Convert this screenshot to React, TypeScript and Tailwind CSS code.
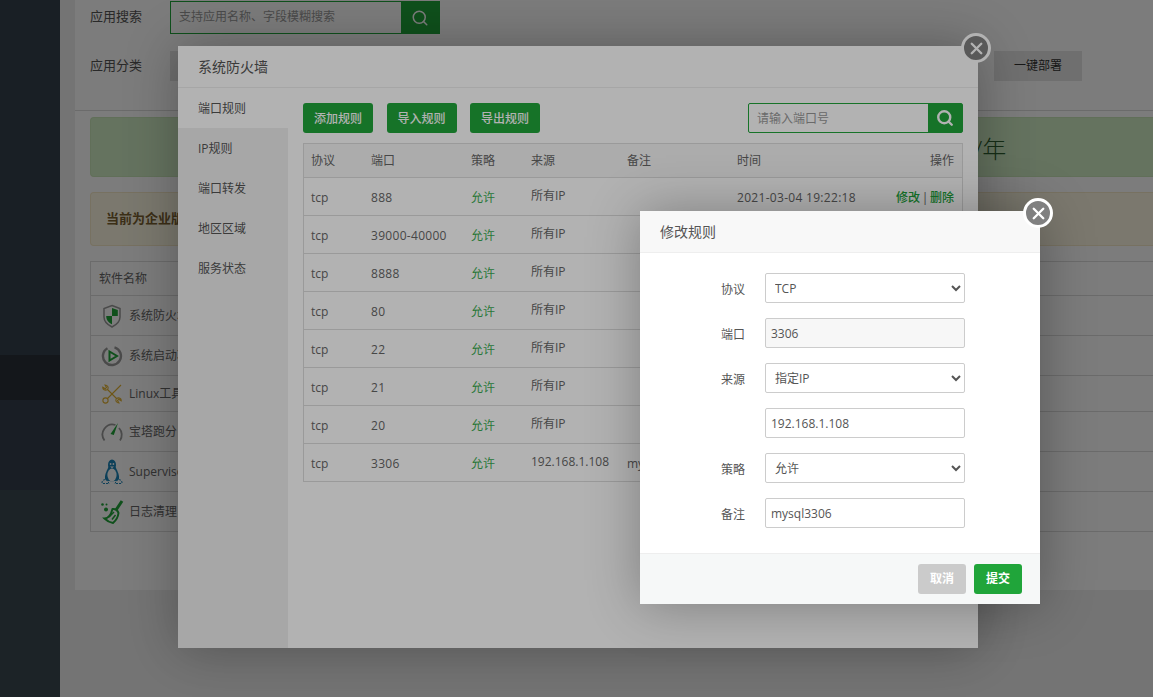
import React from 'react';
import { Search, X } from 'lucide-react';

const FONT = "font-['Open_Sans','Noto_Sans_CJK_SC',sans-serif]";

const ShieldIcon = () => (
  <svg width="20" height="24" viewBox="0 0 20 24">
    <path d="M10 1.5 L18 4.5 V13 C18 18 14 21 10 23 C6 21 2 18 2 13 V4.5 Z" fill="#fff" stroke="#999" strokeWidth="1.5" />
    <path d="M10 4 L15.8 6 V12 H10 Z" fill="#20a53a" />
    <path d="M10 12 V20.3 C7 18.8 4.2 16.4 4.2 12 Z" fill="#20a53a" />
  </svg>
);

const PlayIcon = () => (
  <svg width="22" height="22" viewBox="0 0 22 22">
    <path d="M13.5 2.4 A9 9 0 1 1 6.5 3.2" fill="none" stroke="#999" strokeWidth="2.4" />
    <path d="M8.5 6.5 L16 11 L8.5 15.5 Z" fill="none" stroke="#20a53a" strokeWidth="2" />
  </svg>
);

const ToolsIcon = () => (
  <svg width="20" height="20" viewBox="0 0 20 20" fill="none" stroke="#e2b232" strokeWidth="1.1">
    <path d="M19 1 L5.5 14.5" />
    <circle cx="3.5" cy="16.5" r="2.6" />
    <path d="M5.5 5.5 L14.5 14.5" />
    <path d="M3 1 L4.5 3.5 L3.2 4.8 L0.8 3.2 C0.5 5.5 3 7 5.5 5.5 C7 3.5 5.5 1 3 1 Z" />
    <path d="M17 19 L15.5 16.5 L16.8 15.2 L19.2 16.8 C19.5 14.5 17 13 14.5 14.5 C13 16.5 14.5 19 17 19 Z" />
  </svg>
);

const GaugeIcon = () => (
  <svg width="22" height="20" viewBox="0 0 22 20" fill="none">
    <path d="M3.5 18.5 A10 10 0 0 1 14.5 3" stroke="#999" strokeWidth="1.8" />
    <path d="M18 6 A10 10 0 0 1 19 18.5" stroke="#999" strokeWidth="1.8" />
    <path d="M17 1 L12.8 13 L9.5 12 Z" fill="#20a53a" />
  </svg>
);

const PenguinIcon = () => (
  <svg width="22" height="26" viewBox="0 0 22 26">
    <ellipse cx="11" cy="6" rx="4" ry="5.5" fill="#1c84b8" />
    <path d="M7.5 8 C5 13 3.5 16 4 20 C5 23 17 23 18 20 C18.5 16 17 13 14.5 8 Z" fill="#1c84b8" />
    <ellipse cx="11" cy="16" rx="4.6" ry="6.5" fill="#fff" />
    <circle cx="9.6" cy="5" r="0.9" fill="#fff" />
    <circle cx="12.4" cy="5" r="0.9" fill="#fff" />
    <path d="M9 7.5 H13 L11 9.3 Z" fill="#fff" />
    <path d="M1 24 C1 20.5 4 20 6.5 21.5 L8 24.5 H2 Z M21 24 C21 20.5 18 20 15.5 21.5 L14 24.5 H20 Z" fill="none" stroke="#1c84b8" strokeWidth="1" strokeDasharray="2 1" />
  </svg>
);

const BroomIcon = () => (
  <svg width="24" height="24" viewBox="0 0 24 24" fill="none">
    <path d="M22 1 L16 10" stroke="#20a53a" strokeWidth="3" />
    <path d="M12.5 9 C15 8.5 18 10.5 18.5 13 C18 17 15.5 21 13 23 C10 22.5 7 21 4.5 18.5 C8 18.5 11 15 12.5 9 Z" fill="none" stroke="#20a53a" strokeWidth="2" />
    <path d="M9 17 L14 12 M12 19.5 L15.5 15" stroke="#20a53a" strokeWidth="1.5" />
    <circle cx="2.5" cy="4.5" r="1.3" fill="#20a53a" />
    <circle cx="6.5" cy="4.5" r="1" fill="#20a53a" />
    <circle cx="6" cy="9.5" r="2" fill="#20a53a" />
  </svg>
);

const software = [
  { name: '系统防火墙', icon: <ShieldIcon />, h: 'h-10' },
  { name: '系统启动项', icon: <PlayIcon />, h: 'h-10' },
  { name: 'Linux工具箱', icon: <ToolsIcon />, h: 'h-9' },
  { name: '宝塔跑分', icon: <GaugeIcon />, h: 'h-10' },
  { name: 'Supervisor', icon: <PenguinIcon />, h: 'h-10' },
  { name: '日志清理', icon: <BroomIcon />, h: 'h-10' },
];

const rules = [
  { port: '888', source: '所有IP', note: '' },
  { port: '39000-40000', source: '所有IP', note: '' },
  { port: '8888', source: '所有IP', note: '' },
  { port: '80', source: '所有IP', note: '' },
  { port: '22', source: '所有IP', note: '' },
  { port: '21', source: '所有IP', note: '' },
  { port: '20', source: '所有IP', note: '' },
  { port: '3306', source: '192.168.1.108', note: 'mysql3306' },
];

const tabs = ['端口规则', 'IP规则', '端口转发', '地区区域', '服务状态'];

const ROW = 'grid grid-cols-[60px_100px_60px_96px_110px_1fr] items-center pl-[7px] pr-[8px]';

function CloseBtn({ className }: { className: string }) {
  return (
    <button className={`absolute flex h-[30px] w-[30px] items-center justify-center rounded-full border-[3px] border-white bg-[#808080] ${className}`}>
      <X size={19} strokeWidth={3} color="#fff" />
    </button>
  );
}

function Field({ label, children }: { label: string; children: React.ReactNode }) {
  return (
    <div className="flex h-[30px] items-center">
      <label className="w-[105px] pt-[4px] text-right text-[12px] text-[#555]">{label}</label>
      <div className="ml-5 w-[200px]">{children}</div>
    </div>
  );
}

const controlClass = 'h-[30px] w-full rounded-[2px] border border-[#ccc] text-[12px] text-[#555] outline-none';

export default function App() {
  return (
    <div className={`relative h-[697px] w-[1153px] overflow-hidden bg-[#f0f0f0] ${FONT}`}>
      {/* page behind the dialogs */}
      <div className="flex h-full">
        <aside className="flex w-[60px] shrink-0 flex-col bg-[#36414e]">
          <div className="h-[355px]" />
          <div className="h-[45px] bg-[#2c3138]" />
          <div className="h-[90px] bg-[#363f4e]" />
          <div className="flex-1 bg-[#3c4a52]" />
        </aside>
        <main className="ml-[15px] flex h-[590px] flex-1 flex-col bg-white">
          <div className="h-[111px] border-b border-[#ddd] pl-[15px] pt-px">
            <div className="flex h-[33px] items-center">
              <span className="w-20 pb-[2px] text-[13px] text-[#555]">应用搜索</span>
              <div className="flex h-[33px] w-[270px] border border-[#20a53a]">
                <input className="min-w-0 flex-1 bg-transparent pb-[2px] pl-2 text-[12px] outline-none placeholder:text-[#999]" placeholder="支持应用名称、字段模糊搜索" />
                <div className="flex w-[38px] items-center justify-center bg-[#20a53a]">
                  <Search size={18} strokeWidth={2} color="#fff" />
                </div>
              </div>
            </div>
            <div className="mt-[17px] flex h-[30px] items-center">
              <span className="w-20 text-[13px] text-[#555]">应用分类</span>
              <div className="h-[30px] w-[60px] bg-[#e5e5e5]" />
              <div className="ml-[764px] flex h-[30px] w-[88px] items-center justify-center bg-[#e5e5e5] text-[12px] text-[#333]">一键部署</div>
            </div>
          </div>
          <div className="pl-[15px] pt-[6px]">
            <div className="flex h-[60px] items-center rounded-l border border-r-0 border-[#c8e6b8] bg-[#d0edc5] pl-[883px] pt-1 text-[24px] font-light text-[#2f5f30]">/年</div>
            <div className="mt-[15px] flex h-[54px] items-center rounded-l border border-r-0 border-[#f5e8c8] bg-[#fcf8e3] pl-[15px] text-[13px] font-bold text-[#7a6030]">当前为企业版</div>
            <div className="mt-[15px] border-l border-t border-[#ddd]">
              <div className="flex h-[34px] items-center border-b border-[#ddd] pl-2 pt-px text-[12px] text-[#666]">软件名称</div>
              {software.map((s) => (
                <div key={s.name} className={`flex items-center border-b border-[#ddd] ${s.h}`}>
                  <span className="flex w-[38px] shrink-0 justify-center pl-1">{s.icon}</span>
                  <span className="text-[12px] text-[#666]">{s.name}</span>
                </div>
              ))}
            </div>
          </div>
        </main>
      </div>

      <div className="absolute inset-0 bg-black/30" />

      {/* firewall dialog */}
      <div className="absolute left-[178px] top-[46px] h-[602px] w-[800px] bg-white shadow-[1px_1px_50px_rgba(0,0,0,0.3)]">
        <CloseBtn className="right-[-13px] top-[-13px]" />
        <div className="flex h-[42px] items-center border-b border-[#eee] pl-5 text-[14px] text-[#555]">系统防火墙</div>
        <div className="flex h-[560px]">
          <ul className="w-[110px] shrink-0 bg-[#f0f0f0]">
            {tabs.map((t, i) => (
              <li key={t} className={`flex h-10 items-center pl-5 pt-[2px] text-[12px] text-[#555] ${i === 0 ? 'bg-white' : ''}`}>{t}</li>
            ))}
          </ul>
          <div className="flex-1 pl-[15px] pr-[15px] pt-[15px]">
            <div className="flex h-[30px] items-center">
              {['添加规则', '导入规则', '导出规则'].map((b) => (
                <button key={b} className="mr-[13.5px] h-[30px] w-[70px] rounded-[3px] bg-[#20a53a] pt-[2px] text-[12px] font-medium text-white">{b}</button>
              ))}
              <div className="ml-auto flex h-[30px] w-[215px] rounded-[2px] border border-[#20a53a]">
                <input className="min-w-0 flex-1 bg-transparent pl-2 pt-[2px] text-[12px] outline-none placeholder:text-[#999]" placeholder="请输入端口号" />
                <div className="flex w-[34px] items-center justify-center bg-[#20a53a]">
                  <Search size={18} strokeWidth={3.2} color="#fff" />
                </div>
              </div>
            </div>
            <div className="mt-[10px] border border-[#ddd] text-[12px] text-[#666]">
              <div className={`${ROW} h-[34px] border-b border-[#ddd] bg-[#f6f6f6]`}>
                <span>协议</span>
                <span>端口</span>
                <span>策略</span>
                <span>来源</span>
                <span>备注</span>
                <span className="flex justify-between">
                  <span>时间</span>
                  <span>操作</span>
                </span>
              </div>
              {rules.map((r, i) => (
                <div key={r.port} className={`${ROW} pt-[2px] ${i < rules.length - 1 ? 'h-[38px] border-b border-[#ddd]' : 'h-[37px]'}`}>
                  <span>tcp</span>
                  <span className="tracking-[0.3px]">{r.port}</span>
                  <span className="text-[#3bad52]">允许</span>
                  <span className="pb-1">{r.source}</span>
                  <span>{r.note}</span>
                  {i === 0 ? (
                    <span className="flex justify-between">
                      <span className="tracking-[0.3px]">2021-03-04 19:22:18</span>
                      <span className="flex">
                        <span className="font-medium text-[#20a53a]">修改</span>
                        <span className="w-[10px] text-center">|</span>
                        <span className="font-medium text-[#20a53a]">删除</span>
                      </span>
                    </span>
                  ) : (
                    <span />
                  )}
                </div>
              ))}
            </div>
          </div>
        </div>
      </div>

      <div className="absolute inset-0 bg-black/30" />

      {/* edit rule dialog */}
      <div className="absolute left-[640px] top-[211px] h-[393px] w-[400px] bg-white shadow-[1px_1px_50px_rgba(0,0,0,0.3)]">
        <CloseBtn className="right-[-13px] top-[-13px]" />
        <div className="flex h-[42px] items-center border-b border-[#eee] bg-[#f8f8f8] pl-5 text-[14px] text-[#555]">修改规则</div>
        <div className="flex h-[300px] flex-col gap-[15px] pt-[20px]">
          <Field label="协议">
            <select className={`${controlClass} bg-white pl-[5px]`} defaultValue="tcp">
              <option value="tcp">TCP</option>
            </select>
          </Field>
          <Field label="端口">
            <input className={`${controlClass} bg-[#f7f7f7] px-[5px]`} defaultValue="3306" readOnly />
          </Field>
          <Field label="来源">
            <select className={`${controlClass} bg-white pl-[5px]`} defaultValue="ip">
              <option value="ip">指定IP</option>
            </select>
          </Field>
          <Field label="">
            <input className={`${controlClass} bg-white px-[5px]`} defaultValue="192.168.1.108" />
          </Field>
          <Field label="策略">
            <select className={`${controlClass} bg-white pl-[5px]`} defaultValue="allow">
              <option value="allow">允许</option>
            </select>
          </Field>
          <Field label="备注">
            <input className={`${controlClass} bg-white px-[5px]`} defaultValue="mysql3306" />
          </Field>
        </div>
        <div className="flex h-[51px] items-center justify-end gap-2 border-t border-[#eee] bg-[#f6f8f8] pr-[18px]">
          <button className="h-[30px] w-12 rounded-[3px] bg-[#cbcbcb] text-[12px] font-bold text-white">取消</button>
          <button className="h-[30px] w-12 rounded-[3px] bg-[#20a53a] text-[12px] font-bold text-white">提交</button>
        </div>
      </div>
    </div>
  );
}
